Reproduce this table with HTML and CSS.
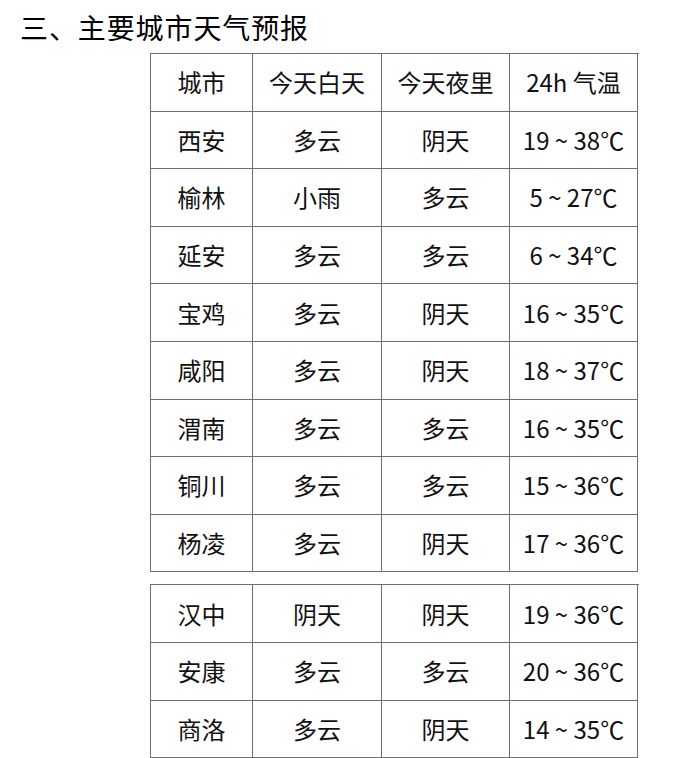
FILE: index.html
```html
<!DOCTYPE html>
<html lang="zh">
<head>
<meta charset="utf-8">
<link rel="stylesheet" href="styles.css">
</head>
<body>
<h1 class="title">三、主要城市天气预报</h1>
<div class="grid first">
  <div class="cell">城市</div><div class="cell">今天白天</div><div class="cell">今天夜里</div><div class="cell">24h 气温</div>
  <div class="cell">西安</div><div class="cell">多云</div><div class="cell">阴天</div><div class="cell">19 ~ 38℃</div>
  <div class="cell">榆林</div><div class="cell">小雨</div><div class="cell">多云</div><div class="cell">5 ~ 27℃</div>
  <div class="cell">延安</div><div class="cell">多云</div><div class="cell">多云</div><div class="cell">6 ~ 34℃</div>
  <div class="cell">宝鸡</div><div class="cell">多云</div><div class="cell">阴天</div><div class="cell">16 ~ 35℃</div>
  <div class="cell">咸阳</div><div class="cell">多云</div><div class="cell">阴天</div><div class="cell">18 ~ 37℃</div>
  <div class="cell">渭南</div><div class="cell">多云</div><div class="cell">多云</div><div class="cell">16 ~ 35℃</div>
  <div class="cell">铜川</div><div class="cell">多云</div><div class="cell">多云</div><div class="cell">15 ~ 36℃</div>
  <div class="cell">杨凌</div><div class="cell">多云</div><div class="cell">阴天</div><div class="cell">17 ~ 36℃</div>
</div>
<div class="grid second">
  <div class="cell">汉中</div><div class="cell">阴天</div><div class="cell">阴天</div><div class="cell">19 ~ 36℃</div>
  <div class="cell">安康</div><div class="cell">多云</div><div class="cell">多云</div><div class="cell">20 ~ 36℃</div>
  <div class="cell">商洛</div><div class="cell">多云</div><div class="cell">阴天</div><div class="cell">14 ~ 35℃</div>
</div>
</body>
</html>
```
FILE: styles.css
```css
html, body {
  margin: 0;
  padding: 0;
  background: #fff;
}
body {
  font-family: "Noto Sans CJK SC", "Noto Sans", sans-serif;
  color: #111;
}
.title {
  margin: 0;
  padding: 9px 0 0 20px;
  height: 44px;
  font-size: 28px;
  font-weight: 400;
  line-height: 36px;
  letter-spacing: 0.9px;
  color: #000;
}
.grid {
  display: grid;
  grid-template-columns: 102px 129px 128px 128px;
  grid-auto-rows: 57.6px;
  width: 488px;
  margin-left: 150px;
  border-top: 1px solid #6f6f6f;
  border-left: 1px solid #6f6f6f;
}
.second {
  margin-top: 12px;
}
.cell {
  box-sizing: border-box;
  border-right: 1px solid #6f6f6f;
  border-bottom: 1px solid #6f6f6f;
  display: flex;
  align-items: center;
  justify-content: center;
  font-size: 24px;
  line-height: 1;
}
```
